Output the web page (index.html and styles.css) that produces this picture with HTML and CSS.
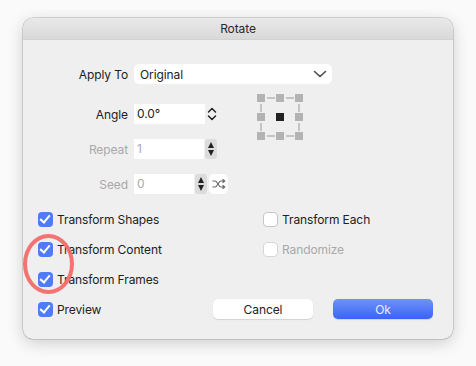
FILE: index.html
```html
<!DOCTYPE html>
<html lang="en">
<head>
    <meta charset="UTF-8">
    <meta name="viewport" content="width=device-width, initial-scale=1.0">
    <title>Rotate</title>
    <link rel="stylesheet" href="styles.css">
</head>
<body>
    <div class="dialog">
        <div class="title-bar">Rotate</div>
        <div class="dialog-body">
            <div class="form-row apply-row">
                <label class="field-label">Apply To</label>
                <div class="select">
                    <span>Original</span>
                    <svg class="chevron" width="14" height="8" viewBox="0 0 14 8">
                        <path d="M1.5 1.5 L7 6.5 L12.5 1.5" fill="none" stroke="#4a4a4a" stroke-width="1.6" stroke-linecap="round" stroke-linejoin="round"/>
                    </svg>
                </div>
            </div>

            <div class="mid-section">
                <div class="mid-fields">
                    <div class="form-row">
                        <label class="field-label">Angle</label>
                        <div class="input angle-input">0.0°</div>
                        <svg class="updown" width="12" height="16" viewBox="0 0 12 16">
                            <path d="M2.5 6 L6 2.5 L9.5 6 M2.5 10 L6 13.5 L9.5 10" fill="none" stroke="#222" stroke-width="1.5" stroke-linecap="round" stroke-linejoin="round"/>
                        </svg>
                    </div>
                    <div class="form-row disabled">
                        <label class="field-label">Repeat</label>
                        <div class="input repeat-input">1</div>
                        <div class="stepper">
                            <span class="tri up"></span>
                            <span class="tri down"></span>
                        </div>
                    </div>
                </div>
                <div class="anchor">
                    <span class="dot"></span><span class="hbar"></span><span class="dot"></span><span class="hbar"></span><span class="dot"></span>
                    <span class="vbar"></span><span></span><span></span><span></span><span class="vbar"></span>
                    <span class="dot"></span><span></span><span class="dot active"></span><span></span><span class="dot"></span>
                    <span class="vbar"></span><span></span><span></span><span></span><span class="vbar"></span>
                    <span class="dot"></span><span class="hbar"></span><span class="dot"></span><span class="hbar"></span><span class="dot"></span>
                </div>
            </div>

            <div class="form-row disabled seed-row">
                <label class="field-label">Seed</label>
                <div class="input seed-input">0</div>
                <div class="stepper">
                    <span class="tri up"></span>
                    <span class="tri down"></span>
                </div>
                <div class="shuffle">
                    <svg width="14" height="10" viewBox="0 0 14 10">
                        <path d="M0.5 2 H3 C5.5 2 6.5 8 9 8 H12.5 M0.5 8 H3 C5.5 8 6.5 2 9 2 H12.5 M10.5 0.3 L12.8 2 L10.5 3.7 M10.5 6.3 L12.8 8 L10.5 9.7" fill="none" stroke="#666" stroke-width="1.1" stroke-linejoin="round"/>
                    </svg>
                </div>
            </div>

            <div class="options">
                <div class="check-row"><span class="checkbox checked"></span>Transform Shapes</div>
                <div class="check-row"><span class="checkbox"></span>Transform Each</div>
                <div class="check-row"><span class="checkbox checked"></span>Transform Content</div>
                <div class="check-row disabled"><span class="checkbox"></span>Randomize</div>
                <div class="check-row"><span class="checkbox checked"></span>Transform Frames</div>
            </div>

            <div class="footer">
                <div class="check-row"><span class="checkbox checked"></span>Preview</div>
                <div class="buttons">
                    <button class="btn">Cancel</button>
                    <button class="btn primary">Ok</button>
                </div>
            </div>
        </div>
    </div>

    <!-- red annotation ring drawn over the screenshot -->
    <div class="annotation"></div>
</body>
</html>
```

FILE: styles.css
```css
body {
    font-family: Inter, "Noto Sans", sans-serif;
    font-size: 12px;
    letter-spacing: -0.1px;
    color: #222222;
    background-color: #fafafa;
    margin: 0;
    padding: 18px 23px;
    position: relative;
}

.dialog {
    width: 430px;
    height: 321px;
    background-color: #efefef;
    border-radius: 10px;
    box-shadow: 0 0 0 0.5px rgba(0, 0, 0, 0.25), 0 4px 16px rgba(0, 0, 0, 0.18);
    overflow: hidden;
}

.title-bar {
    height: 22px;
    line-height: 22px;
    text-align: center;
    color: #2a2a2a;
    background: linear-gradient(#e9e9e9, #d9d9d9);
    border-bottom: 1px solid #d2d2d2;
    box-sizing: border-box;
}

.dialog-body {
    padding: 24px 20px 20px 15px;
}

.form-row {
    display: flex;
    align-items: center;
    height: 20px;
}

.apply-row {
    margin-bottom: 20px;
}

.seed-row {
    margin-top: 15px;
}

.field-label {
    width: 90px;
    text-align: right;
    margin-right: 6px;
}

.disabled {
    color: #a9a9a9;
}

.select {
    width: 198px;
    height: 20px;
    background-color: #ffffff;
    border-radius: 5px;
    display: flex;
    align-items: center;
    justify-content: space-between;
    padding: 0 5px 0 6px;
    box-sizing: border-box;
}

.input {
    height: 20px;
    line-height: 20px;
    background-color: #ffffff;
    padding-left: 3px;
    box-sizing: border-box;
}

.angle-input {
    width: 71px;
}

.repeat-input {
    width: 70px;
}

.seed-input {
    width: 60px;
}

.updown {
    margin-left: 1px;
}

.stepper {
    width: 12px;
    height: 20px;
    margin-left: 1px;
    background-color: #dcdcdc;
    border-radius: 3px;
    display: flex;
    flex-direction: column;
    align-items: center;
    justify-content: space-around;
    padding: 2px 0;
    box-sizing: border-box;
}

.tri {
    width: 0;
    height: 0;
    border-left: 3.5px solid transparent;
    border-right: 3.5px solid transparent;
}

.tri.up {
    border-bottom: 6px solid #222222;
}

.tri.down {
    border-top: 6px solid #222222;
}

.shuffle {
    width: 19px;
    height: 20px;
    margin-left: 2px;
    background-color: #ffffff;
    border-radius: 5px;
    display: flex;
    align-items: center;
    justify-content: center;
}

.mid-section {
    display: flex;
}

.mid-fields {
    display: flex;
    flex-direction: column;
    gap: 15px;
    width: 218px;
}

.anchor {
    display: grid;
    grid-template-columns: 8px 11px 8px 11px 8px;
    grid-template-rows: 8px 11px 8px 11px 8px;
    margin-top: -10px;
    margin-left: 1px;
    align-items: center;
    justify-items: center;
}

.dot {
    width: 8px;
    height: 8px;
    background-color: #b3b3b3;
}

.dot.active {
    background-color: #222222;
}

.hbar {
    width: 8px;
    height: 2px;
    background-color: #c4c4c4;
}

.vbar {
    width: 2px;
    height: 8px;
    background-color: #c4c4c4;
}

.options {
    display: grid;
    grid-template-columns: 225px 1fr;
    row-gap: 14px;
    margin-top: 17px;
}

.check-row {
    display: flex;
    align-items: center;
    height: 16px;
    gap: 4px;
}

.checkbox {
    width: 15px;
    height: 15px;
    border-radius: 4px;
    box-sizing: border-box;
    background-color: #ffffff;
    border: 1px solid #c6c6c6;
    position: relative;
}

.check-row.disabled .checkbox {
    border-color: #d6d6d6;
}

.checkbox.checked {
    border: none;
    background-color: #4f7cf6;
}

.checkbox.checked::after {
    content: "";
    position: absolute;
    left: 4px;
    top: 1.5px;
    width: 4px;
    height: 8px;
    border-right: 2.5px solid #ffffff;
    border-bottom: 2.5px solid #ffffff;
    transform: rotate(40deg);
}

.footer {
    display: flex;
    align-items: center;
    justify-content: space-between;
    margin-top: 12px;
}

.buttons {
    display: flex;
    gap: 20px;
}

.btn {
    width: 100px;
    height: 20px;
    border: none;
    border-radius: 5px;
    background-color: #ffffff;
    font-family: inherit;
    font-size: 12px;
    letter-spacing: -0.1px;
    color: #222222;
    padding: 0;
    box-shadow: 0 0.5px 1px rgba(0, 0, 0, 0.12);
}

.btn.primary {
    background: linear-gradient(#6f93f8, #3a63f6);
    color: #e8eeff;
}

.annotation {
    position: absolute;
    left: 23px;
    top: 234px;
    width: 51px;
    height: 60px;
    border: 4px solid #f26c6c;
    border-radius: 50%;
    box-sizing: border-box;
    opacity: 0.95;
}
```
